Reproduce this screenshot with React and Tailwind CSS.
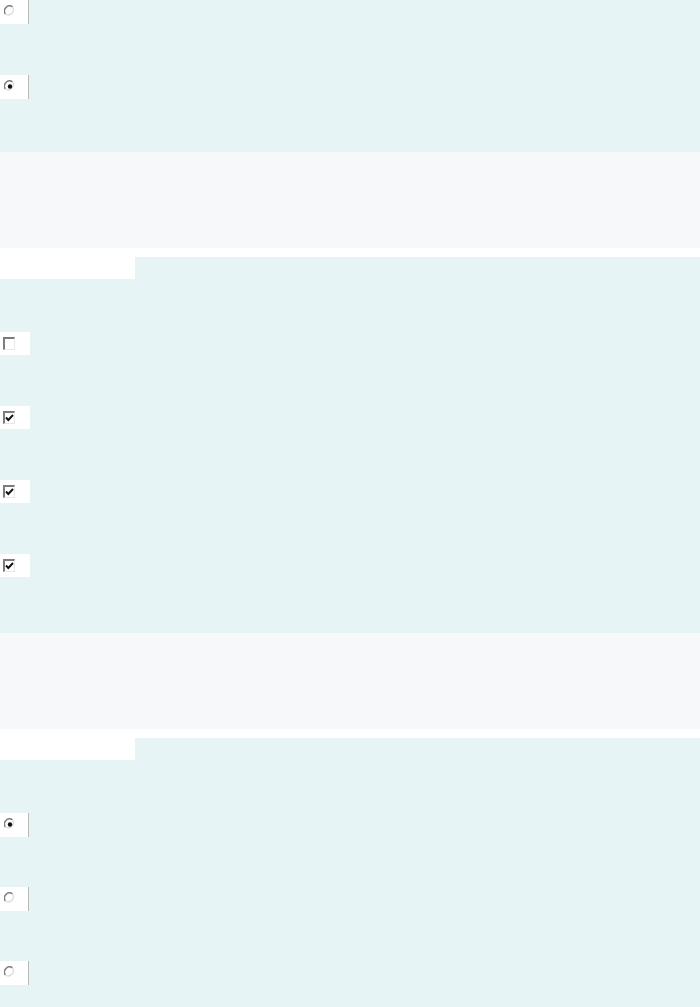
import React from "react";

function Radio({ checked }) {
  return (
    <div className="h-6 w-[29px] bg-white border-r border-[#b9b9b9] flex items-start pl-[4px] pt-[5px]">
      <svg width="12" height="13" viewBox="0 0 12 13">
        <circle cx="6" cy="6.5" r="5.5" fill="#fff" />
        <path d="M1.3 9 A5.2 5.2 0 0 1 8.5 1.8" fill="none" stroke="#808080" strokeWidth="1.6" />
        <path d="M8.5 1.8 A5.2 5.2 0 0 1 1.3 9" fill="none" stroke="#dcdcdc" strokeWidth="1.3" />
        {checked && <circle cx="6" cy="6.5" r="2.2" fill="#111" />}
      </svg>
    </div>
  );
}

function Check({ checked }) {
  return (
    <div className="h-[23px] w-[30px] bg-white flex items-start pl-[3px] pt-[5px]">
      <div className="w-[12px] h-[13px] border-t-2 border-l-2 border-[#7c7c7c] border-b border-r border-b-[#e8e8e8] border-r-[#e8e8e8] bg-white flex items-center justify-center">
        {checked && (
          <svg width="9" height="8" viewBox="0 0 9 8">
            <path d="M1 3.5 L3.3 6 L8 1" fill="none" stroke="#111" strokeWidth="1.9" />
          </svg>
        )}
      </div>
    </div>
  );
}

function Divider() {
  return (
    <div>
      <div className="h-[96px] bg-[#f6f8f9]" />
      <div className="h-[9px] bg-white" />
      <div className="h-[22px] w-[135px] bg-white" />
    </div>
  );
}

export default function App() {
  return (
    <div className="w-[700px] h-[1007px] bg-[#e6f4f6] overflow-hidden">
      <div className="h-[152px] flex flex-col gap-[51px]">
        <Radio />
        <Radio checked />
      </div>
      <Divider />
      <div className="h-[354px] pt-[53px] flex flex-col gap-[51px]">
        <Check />
        <Check checked />
        <Check checked />
        <Check checked />
      </div>
      <Divider />
      <div className="pt-[53px] flex flex-col gap-[50px]">
        <Radio checked />
        <Radio />
        <Radio />
      </div>
    </div>
  );
}
